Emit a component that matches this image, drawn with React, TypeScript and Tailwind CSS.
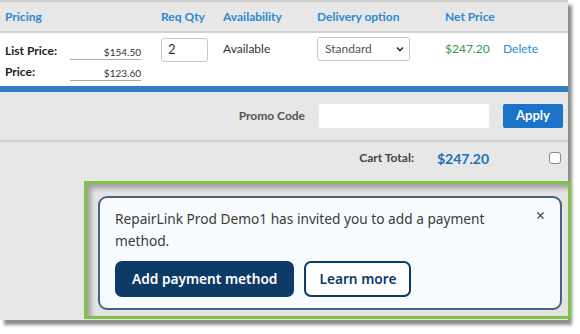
import { X } from 'lucide-react'

const COLS = 'grid grid-cols-[156px_62px_94px_128px_58px_1fr] items-center'

export default function App() {
  return (
    <div className="w-[580px] h-[334px] bg-white overflow-hidden">
      <div className="relative w-[568px] h-[320px] bg-[#e7e7e7] border-t-2 border-[#cfcfcf] shadow-[4px_5px_3px_rgba(0,0,0,0.45)]"
           style={{ fontFamily: 'Lato, "Liberation Sans", sans-serif' }}>
        {/* header */}
        <div className={`${COLS} h-[31px] pl-[5px] border-b-2 border-[#d2d2d2] text-[12px] font-bold text-[#2c8ad0]`}>
          <span>Pricing</span>
          <span>Req Qty</span>
          <span>Availability</span>
          <span>Delivery option</span>
          <span>Net Price</span>
          <span />
        </div>

        {/* line item */}
        <div className={`${COLS} items-start h-[53px] pl-[5px] bg-white text-[12px] text-[#333]`}>
          <div className="pt-[9px] flex flex-col gap-[3px]">
            <div className="flex items-end">
              <span className="w-[65px] font-bold text-[#222]">List Price:</span>
              <span className="w-[71px] text-right text-[10px] border-b border-[#aaa] leading-[14px]">$154.50</span>
            </div>
            <div className="flex items-end">
              <span className="w-[65px] font-bold text-[#222]">Price:</span>
              <span className="w-[71px] text-right text-[10px] border-b border-[#aaa] leading-[14px]">$123.60</span>
            </div>
          </div>
          <div className="pt-[5px]">
            <div className="w-[47px] h-[24px] border border-[#c8c8c8] rounded-[3px] px-[6px] flex items-center text-[13px]">2</div>
          </div>
          <div className="pt-[7px]">Available</div>
          <div className="pt-[4px]">
            <div className="w-[93px] h-[24px] border border-[#c8c8c8] rounded-[3px] pl-[7px] pr-[4px] flex items-center justify-between text-[#555]">
              Standard
              <svg width="10" height="10" viewBox="0 0 10 10"><path d="M2 3.5 5 6.5 8 3.5" fill="none" stroke="#333" strokeWidth="1.6" /></svg>
            </div>
          </div>
          <div className="pt-[7px] text-[#2e9a48]">$247.20</div>
          <div className="pt-[7px] text-[#2c8ad0]">Delete</div>
        </div>

        <div className="h-[6px] bg-[#2f7fc5]" />

        {/* promo */}
        <div className="h-[50px] flex items-center justify-end gap-[14px] pr-[5px] border-b-2 border-[#cfcfcf] text-[12px]">
          <span className="font-bold text-[#555]">Promo Code</span>
          <div className="w-[170px] h-[24px] bg-white rounded-[2px]" />
          <button className="w-[60px] h-[24px] bg-[#1b73c7] rounded-[2px] text-white font-bold text-[13px]">Apply</button>
        </div>

        {/* cart total */}
        <div className="h-[32px] flex items-center text-[12px]">
          <span className="ml-auto font-bold text-[#444]">Cart Total:</span>
          <span className="ml-[23px] w-[112px] font-bold text-[14px] text-[#1d72b8]">$247.20</span>
          <span className="w-[12px] h-[12px] mr-[7px] rounded-[3px] border border-[#888] bg-white" />
        </div>

        {/* payment invite */}
        <div className="flex justify-end pt-[7px]">
          <div className="w-[487px] h-[138px] -mr-[3px] border-[3px] border-[#7cc442] pl-[11px] pt-[12px] pr-[6px] pb-[6px] bg-[#e4e4e4] shadow-[inset_4px_4px_5px_rgba(0,0,0,0.3)]"
               style={{ fontFamily: '"Noto Sans", "Open Sans", sans-serif' }}>
            <div className="relative h-full rounded-[9px] border-2 border-[#46647e] bg-[#f7fbfd] pl-[15px] pt-[10px]">
              <p className="text-[13.7px] leading-[22px] text-[#3b3b3b] w-[385px]">
                RepairLink Prod Demo1 has invited you to add a payment method.
              </p>
              <X className="absolute top-[12px] right-[14px] text-[#444]" size={11} strokeWidth={2.5} />
              <div className="flex gap-[10px] mt-[9px]">
                <button className="h-[36px] px-[17px] rounded-[7px] bg-[#0e3a66] text-white text-[13.7px] font-semibold">Add payment method</button>
                <button className="h-[36px] px-[13px] rounded-[7px] border-2 border-[#0e3a66] bg-white text-[#0e3a66] text-[13.7px] font-semibold">Learn more</button>
              </div>
            </div>
          </div>
        </div>
      </div>
    </div>
  )
}
